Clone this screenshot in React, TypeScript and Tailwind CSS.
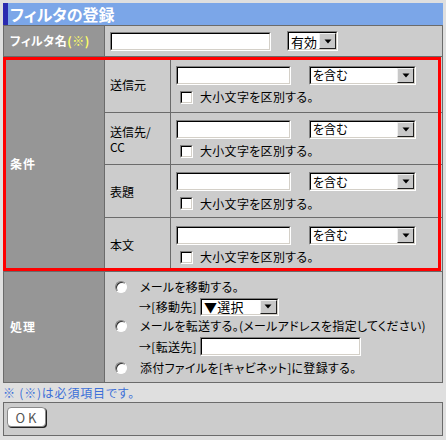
import React from "react";

function Inset({ className, children }: { className: string; children?: React.ReactNode }) {
  return (
    <div className={`${className} shrink-0 border border-t-[#808080] border-l-[#808080] border-b-white border-r-white`}>
      <div className="flex h-full w-full items-center border border-t-black border-l-black border-b-[#d4d0c8] border-r-[#d4d0c8] bg-white">
        {children}
      </div>
    </div>
  );
}

function Select({ className, text, textClass }: { className: string; text: string; textClass: string }) {
  return (
    <Inset className={className}>
      <span className={`flex-1 pl-[2px] leading-none text-black ${textClass}`}>{text}</span>
      <div className="flex h-full w-[17px] items-center justify-center border border-t-[#f0f0f0] border-l-[#f0f0f0] border-b-[#202020] border-r-[#202020] bg-[#c8c8c8]">
        <svg width="8" height="5" viewBox="0 0 8 5">
          <path d="M0.5 0.5h7L4 4.5z" fill="#000" />
        </svg>
      </div>
    </Inset>
  );
}

function Checkbox() {
  return <Inset className="w-[13px] h-[13px]" />;
}

function Radio() {
  return (
    <div className="h-[12px] w-[12px] shrink-0 rounded-full border border-t-[#808080] border-l-[#808080] border-b-white border-r-white bg-white shadow-[inset_1px_1px_0_#303030]" />
  );
}

function CondRow({ label, h }: { label: React.ReactNode; h: string }) {
  return (
    <>
      <div className={`${h} flex items-center bg-[#cccccc] pl-[5px] text-[12px] leading-[15px] text-black`}>{label}</div>
      <div className={`${h} flex flex-col justify-center bg-[#cccccc] pl-[5px]`}>
        <div className="flex items-center">
          <Inset className="w-[115px] h-[19px]" />
          <Select className="ml-[18px] w-[107px] h-[19px]" text="を含む" textClass="text-[12px]" />
        </div>
        <div className="mt-[6px] flex items-center pl-[4px]">
          <Checkbox />
          <span className="ml-[7px] text-[12px] leading-none tracking-[0.3px] text-black">大小文字を区別する。</span>
        </div>
      </div>
    </>
  );
}

export default function App() {
  return (
    <div className="h-[440px] w-[446px] bg-[#dfdfdf] pl-[3px] pt-[3px] font-['Noto_Sans_CJK_JP','Noto_Sans',sans-serif] [font-feature-settings:'palt']">
      <div className="w-[440px]">
        <div className="flex h-[22px] items-center border-l-[5px] border-[#2b2bb0] bg-[#7ba6e8] pl-[2px] text-[16px] font-bold leading-none text-white">
          フィルタの登録
        </div>

        <div className="relative grid grid-cols-[100px_1fr] gap-px bg-[#6b6b6b] p-px">
          <div className="flex h-[30px] items-center bg-[#969696] pl-[6px] text-[12px] font-bold leading-none tracking-[0.5px] text-white">
            フィルタ名<span className="text-[#ffff66]">(※)</span>
          </div>
          <div className="flex h-[30px] items-center bg-[#cccccc] pl-[5px]">
            <Inset className="w-[161px] h-[19px]" />
            <Select className="ml-[16px] w-[51px] h-[20px]" text="有効" textClass="text-[13px]" />
          </div>

          <div className="flex items-center bg-[#969696] pl-[6px] text-[12px] font-bold leading-none tracking-[1px] text-white">条件</div>
          <div className="grid grid-cols-[65px_1fr] gap-px bg-[#6b6b6b]">
            <CondRow label="送信元" h="h-[55px]" />
            <CondRow
              label={
                <span>
                  送信先/
                  <br />
                  CC
                </span>
              }
              h="h-[51px]"
            />
            <CondRow label="表題" h="h-[52px]" />
            <CondRow label="本文" h="h-[53px]" />
          </div>

          <div className="flex items-center bg-[#969696] pl-[6px] text-[12px] font-bold leading-none tracking-[1px] text-white">処理</div>
          <div className="flex flex-col bg-[#cccccc] pb-[4px] pl-[10px] pt-[5px] text-[12px] leading-none tracking-[0.3px] text-black">
            <div className="flex h-[20px] items-center">
              <Radio />
              <span className="ml-[13px]">メールを移動する。</span>
            </div>
            <div className="flex h-[19px] items-center pl-[24px]">
              <span>→[移動先]</span>
              <Select className="ml-[3px] w-[79px] h-[18px]" text="▼選択" textClass="text-[13px]" />
            </div>
            <div className="flex h-[20px] items-center">
              <Radio />
              <span className="ml-[13px]">メールを転送する。(メールアドレスを指定してください)</span>
            </div>
            <div className="flex h-[21px] items-center pl-[24px]">
              <span>→[転送先]</span>
              <Inset className="ml-[3px] w-[161px] h-[19px]" />
            </div>
            <div className="flex h-[21px] items-center">
              <Radio />
              <span className="ml-[13px]">添付ファイルを[キャビネット]に登録する。</span>
            </div>
          </div>

          <div className="pointer-events-none absolute left-0 top-[32px] h-[214px] w-[438px] border-[3px] border-[#ff0000]" />
        </div>

        <div className="flex h-[19px] items-center text-[12px] leading-none tracking-[0.8px] text-[#3c6fd8]">※ (※)は必須項目です。</div>

        <div className="h-[34px] border border-[#6b6b6b] bg-[#cccccc] pl-[3px] pt-[4px]">
          <div className="flex h-[20px] w-[39px] items-center justify-center rounded-[4px] border border-[#8a8a8a] bg-white pl-[2px] text-[13px] leading-none tracking-[3px] text-[#555] shadow-[1px_1px_0_#222]">
            OK
          </div>
        </div>
      </div>
    </div>
  );
}
